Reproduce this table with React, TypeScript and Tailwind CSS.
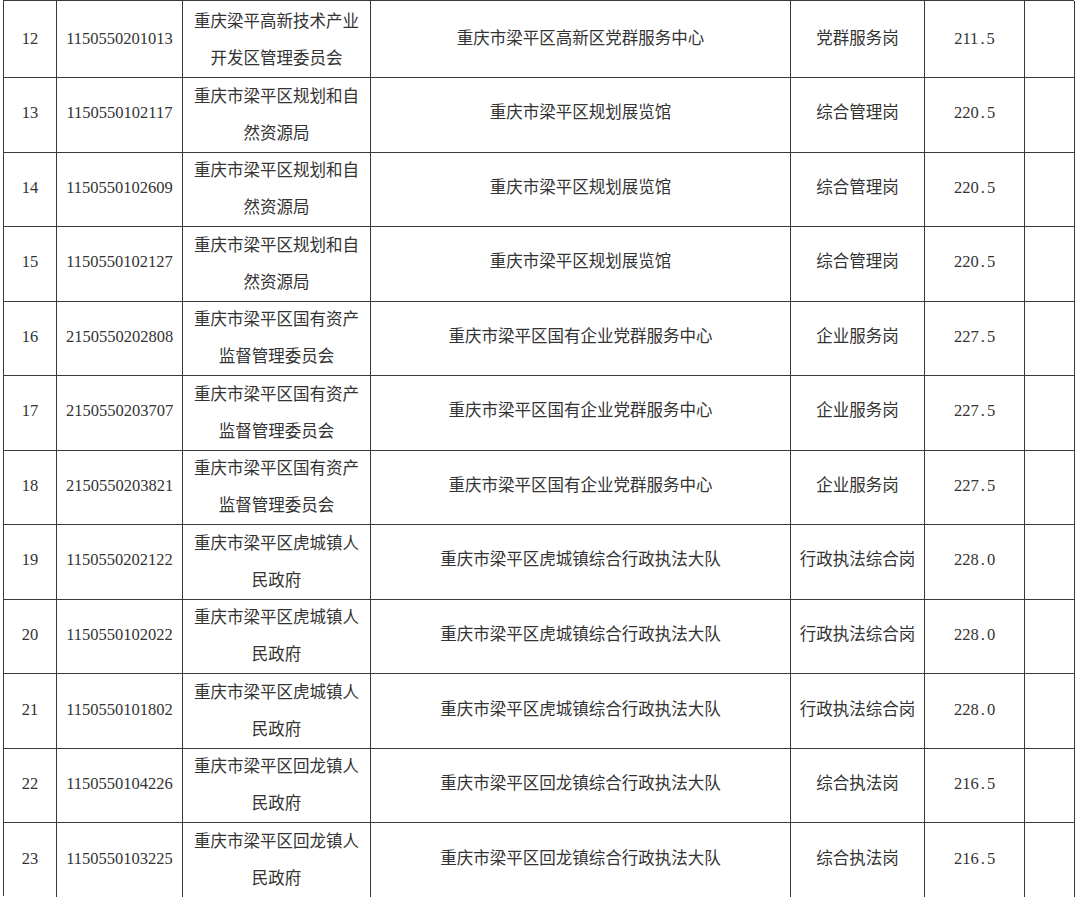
// Admission list table, rows 12–23.

type Row = {
  no: number
  ticket: string
  dept: [string, string]
  unit: string
  post: string
  score: string
}

const PLANNING: [string, string] = ['重庆市梁平区规划和自', '然资源局']
const ASSETS: [string, string] = ['重庆市梁平区国有资产', '监督管理委员会']
const HUCHENG: [string, string] = ['重庆市梁平区虎城镇人', '民政府']
const HUILONG: [string, string] = ['重庆市梁平区回龙镇人', '民政府']

const ROWS: Row[] = [
  { no: 12, ticket: '1150550201013', dept: ['重庆梁平高新技术产业', '开发区管理委员会'], unit: '重庆市梁平区高新区党群服务中心', post: '党群服务岗', score: '211.5' },
  { no: 13, ticket: '1150550102117', dept: PLANNING, unit: '重庆市梁平区规划展览馆', post: '综合管理岗', score: '220.5' },
  { no: 14, ticket: '1150550102609', dept: PLANNING, unit: '重庆市梁平区规划展览馆', post: '综合管理岗', score: '220.5' },
  { no: 15, ticket: '1150550102127', dept: PLANNING, unit: '重庆市梁平区规划展览馆', post: '综合管理岗', score: '220.5' },
  { no: 16, ticket: '2150550202808', dept: ASSETS, unit: '重庆市梁平区国有企业党群服务中心', post: '企业服务岗', score: '227.5' },
  { no: 17, ticket: '2150550203707', dept: ASSETS, unit: '重庆市梁平区国有企业党群服务中心', post: '企业服务岗', score: '227.5' },
  { no: 18, ticket: '2150550203821', dept: ASSETS, unit: '重庆市梁平区国有企业党群服务中心', post: '企业服务岗', score: '227.5' },
  { no: 19, ticket: '1150550202122', dept: HUCHENG, unit: '重庆市梁平区虎城镇综合行政执法大队', post: '行政执法综合岗', score: '228.0' },
  { no: 20, ticket: '1150550102022', dept: HUCHENG, unit: '重庆市梁平区虎城镇综合行政执法大队', post: '行政执法综合岗', score: '228.0' },
  { no: 21, ticket: '1150550101802', dept: HUCHENG, unit: '重庆市梁平区虎城镇综合行政执法大队', post: '行政执法综合岗', score: '228.0' },
  { no: 22, ticket: '1150550104226', dept: HUILONG, unit: '重庆市梁平区回龙镇综合行政执法大队', post: '综合执法岗', score: '216.5' },
  { no: 23, ticket: '1150550103225', dept: HUILONG, unit: '重庆市梁平区回龙镇综合行政执法大队', post: '综合执法岗', score: '216.5' },
]

const cell = 'flex flex-col items-center justify-center border-r border-b border-[#3a3a3a] text-center'

// The source font sets the decimal point half-width, like the digits.
function Score({ value }: { value: string }) {
  const [whole, frac] = value.split('.')
  return (
    <span>
      {whole}
      <span className="inline-block w-[0.5em] text-center">.</span>
      {frac}
    </span>
  )
}

export default function App() {
  return (
    <div className="h-[897px] w-[1080px] overflow-hidden bg-white">
      <div
        className="ml-[3px] w-[1071px] border-t border-l border-[#3a3a3a] text-[16.5px] text-[#333]"
        style={{ fontFamily: '"Liberation Serif", "Noto Sans CJK SC", serif' }}
      >
        {ROWS.map((r) => (
          <div
            key={r.no}
            className="grid h-[74.55px] grid-cols-[53px_126px_188px_420px_134px_100px_50px]"
          >
            <div className={cell}>{r.no}</div>
            <div className={cell}>{r.ticket}</div>
            <div className={`${cell} pt-[2px] leading-[37px]`}>
              <div>{r.dept[0]}</div>
              <div>{r.dept[1]}</div>
            </div>
            <div className={cell}>{r.unit}</div>
            <div className={cell}>{r.post}</div>
            <div className={cell}>
              <Score value={r.score} />
            </div>
            <div className={cell} />
          </div>
        ))}
      </div>
    </div>
  )
}
